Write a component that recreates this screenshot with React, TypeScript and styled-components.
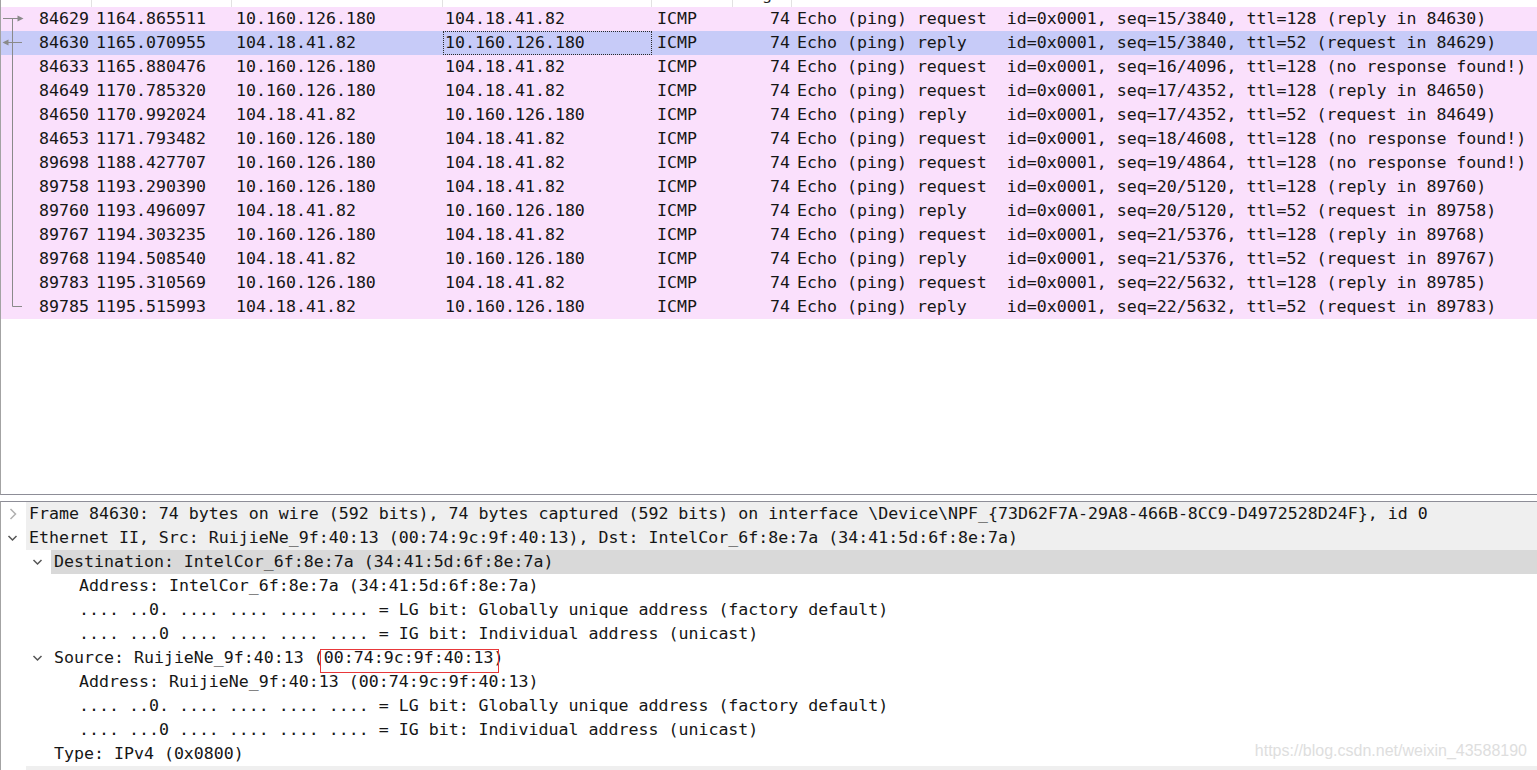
import React from "react";
import styled, { createGlobalStyle, css } from "styled-components";

const Global = createGlobalStyle`
  html, body { margin: 0; padding: 0; background: #fff; overflow: hidden; }
  #root { width: 1537px; height: 770px; }
`;

const MONO = `"DejaVu Sans Mono", "Liberation Mono", monospace`;

const App_ = styled.div`
  width: 1537px;
  height: 770px;
  display: flex;
  flex-direction: column;
  overflow: hidden;
  background: #fff;
  font-family: ${MONO};
  font-size: 16.6px;
  color: #161616;
`;

const PacketPane = styled.div`
  height: 495px;
  box-sizing: border-box;
  border-left: 1px solid #a3a3a3;
  border-bottom: 1px solid #8d8d97;
  overflow: hidden;
  flex: none;
`;

type Col = { w: number; align: "left" | "right"; pl: number; pr: number };
const COLS: Col[] = [
  { w: 91, align: "right", pl: 0, pr: 3 },
  { w: 140, align: "left", pl: 4, pr: 0 },
  { w: 211, align: "left", pl: 4, pr: 0 },
  { w: 209, align: "left", pl: 2, pr: 0 },
  { w: 81, align: "left", pl: 5, pr: 0 },
  { w: 59, align: "right", pl: 0, pr: 2 },
  { w: 0, align: "left", pl: 5, pr: 0 },
];
const gridTemplate = COLS.map((c) => (c.w ? `${c.w}px` : "1fr")).join(" ");

const HeaderRow = styled.div`
  display: grid;
  grid-template-columns: ${gridTemplate};
  height: 24px;
  margin-top: -17px;
  background: #fff;
  font-family: "Noto Sans", "Liberation Sans", sans-serif;
  font-size: 15px;
  line-height: 20px;
  color: #222;
`;

const HeaderCell = styled.div<{ $last?: boolean }>`
  padding-left: 4px;
  border-right: ${(p) => (p.$last ? "none" : "1px solid #e2e2e2")};
  white-space: nowrap;
  overflow: hidden;
`;

const PacketRow = styled.div<{ $selected?: boolean }>`
  display: grid;
  grid-template-columns: ${gridTemplate};
  height: 24px;
  line-height: 24px;
  background: ${(p) => (p.$selected ? "#c7cbf8" : "#fae0fc")};
  white-space: pre;
`;

const Cell = styled.div<{ $align: string; $pl: number; $pr: number; $focus?: boolean }>`
  text-align: ${(p) => p.$align};
  padding-left: ${(p) => p.$pl}px;
  padding-right: ${(p) => p.$pr}px;
  overflow: hidden;
  ${(p) =>
    p.$focus &&
    css`
      outline: 1px dotted #2a2a2a;
      outline-offset: -1px;
    `}
`;

const NoCell = styled.div`
  display: flex;
  align-items: center;
  justify-content: space-between;
  padding-right: 3px;
`;

const RelSvg = styled.svg`
  width: 24px;
  height: 24px;
  flex: none;
  display: block;
`;

type Rel = "first" | "reply" | "mid" | "last";

function RelIcon({ kind }: { kind: Rel }) {
  const c = "#8a8a8a";
  return (
    <RelSvg viewBox="0 0 24 24">
      {kind === "first" && (
        <>
          <path d="M2 11.5H17M11.5 11.5V24" stroke={c} strokeWidth="1" fill="none" />
          <polygon points="16.5,8.5 22.5,11.5 16.5,14.5" fill={c} />
        </>
      )}
      {kind === "reply" && (
        <>
          <path d="M11.5 0V24M7 11.5H21" stroke={c} strokeWidth="1" fill="none" />
          <polygon points="1.5,11.5 7.5,8.5 7.5,14.5" fill={c} />
        </>
      )}
      {kind === "mid" && <path d="M11.5 0V24" stroke={c} strokeWidth="1" fill="none" />}
      {kind === "last" && <path d="M11.5 0V11.5H21" stroke={c} strokeWidth="1" fill="none" />}
    </RelSvg>
  );
}

type Pkt = {
  no: string;
  time: string;
  src: string;
  dst: string;
  kind: "request" | "reply";
  seq: string;
  ttl: string;
  tail: string;
  rel: Rel;
  selected?: boolean;
};

const A = "10.160.126.180";
const B = "104.18.41.82";

const PACKETS: Pkt[] = [
  { no: "84629", time: "1164.865511", src: A, dst: B, kind: "request", seq: "15/3840", ttl: "128", tail: "(reply in 84630)", rel: "first" },
  { no: "84630", time: "1165.070955", src: B, dst: A, kind: "reply", seq: "15/3840", ttl: "52", tail: "(request in 84629)", rel: "reply", selected: true },
  { no: "84633", time: "1165.880476", src: A, dst: B, kind: "request", seq: "16/4096", ttl: "128", tail: "(no response found!)", rel: "mid" },
  { no: "84649", time: "1170.785320", src: A, dst: B, kind: "request", seq: "17/4352", ttl: "128", tail: "(reply in 84650)", rel: "mid" },
  { no: "84650", time: "1170.992024", src: B, dst: A, kind: "reply", seq: "17/4352", ttl: "52", tail: "(request in 84649)", rel: "mid" },
  { no: "84653", time: "1171.793482", src: A, dst: B, kind: "request", seq: "18/4608", ttl: "128", tail: "(no response found!)", rel: "mid" },
  { no: "89698", time: "1188.427707", src: A, dst: B, kind: "request", seq: "19/4864", ttl: "128", tail: "(no response found!)", rel: "mid" },
  { no: "89758", time: "1193.290390", src: A, dst: B, kind: "request", seq: "20/5120", ttl: "128", tail: "(reply in 89760)", rel: "mid" },
  { no: "89760", time: "1193.496097", src: B, dst: A, kind: "reply", seq: "20/5120", ttl: "52", tail: "(request in 89758)", rel: "mid" },
  { no: "89767", time: "1194.303235", src: A, dst: B, kind: "request", seq: "21/5376", ttl: "128", tail: "(reply in 89768)", rel: "mid" },
  { no: "89768", time: "1194.508540", src: B, dst: A, kind: "reply", seq: "21/5376", ttl: "52", tail: "(request in 89767)", rel: "mid" },
  { no: "89783", time: "1195.310569", src: A, dst: B, kind: "request", seq: "22/5632", ttl: "128", tail: "(reply in 89785)", rel: "mid" },
  { no: "89785", time: "1195.515993", src: B, dst: A, kind: "reply", seq: "22/5632", ttl: "52", tail: "(request in 89783)", rel: "last" },
];

const HEADERS = ["No.", "Time", "Source", "Destination", "Protocol", "Length", "Info"];

const Splitter = styled.div`
  height: 6px;
  flex: none;
  background: #fff;
`;

const DetailPane = styled.div`
  position: relative;
  flex: 1;
  border-top: 1px solid #8d8d97;
  border-left: 1px solid #a3a3a3;
  overflow: hidden;
`;

const DetailRow = styled.div<{ $level: number }>`
  display: flex;
  height: 24px;
  line-height: 24px;
  padding-left: ${(p) => p.$level * 25}px;
  white-space: pre;
`;

const Expander = styled.div`
  width: 25px;
  height: 24px;
  flex: none;
  display: flex;
  align-items: center;
`;

const Label = styled.div<{ $tone: "none" | "top" | "selected" }>`
  flex: 1;
  padding-left: 3px;
  background: ${(p) => (p.$tone === "top" ? "#efefef" : p.$tone === "selected" ? "#d9d9d9" : "transparent")};
`;

const Marked = styled.span`
  position: relative;
  &::after {
    content: "";
    position: absolute;
    left: -4px;
    right: -5px;
    top: 1px;
    height: 24px;
    border: 1px solid #e8383a;
    box-sizing: border-box;
  }
`;

const Watermark = styled.div`
  position: absolute;
  right: 10px;
  bottom: 11px;
  font-family: "Liberation Sans", Arial, sans-serif;
  font-size: 16px;
  line-height: 16px;
  color: #dedede;
  white-space: nowrap;
`;

function Chevron({ open }: { open: boolean }) {
  return (
    <svg width="25" height="24" viewBox="0 0 25 24" style={{ display: "block" }}>
      {open ? (
        <path d="M7.5 10L11.5 14L15.5 10" stroke="#555" strokeWidth="1.5" fill="none" />
      ) : (
        <path d="M9.5 7L14.5 12L9.5 17" stroke="#b0b0b0" strokeWidth="1.5" fill="none" />
      )}
    </svg>
  );
}

type D = { level: number; text: React.ReactNode; exp?: "open" | "closed"; tone?: "none" | "top" | "selected" };

const DETAILS: D[] = [
  {
    level: 0,
    exp: "closed",
    tone: "top",
    text: "Frame 84630: 74 bytes on wire (592 bits), 74 bytes captured (592 bits) on interface \\Device\\NPF_{73D62F7A-29A8-466B-8CC9-D4972528D24F}, id 0",
  },
  {
    level: 0,
    exp: "open",
    tone: "top",
    text: "Ethernet II, Src: RuijieNe_9f:40:13 (00:74:9c:9f:40:13), Dst: IntelCor_6f:8e:7a (34:41:5d:6f:8e:7a)",
  },
  { level: 1, exp: "open", tone: "selected", text: "Destination: IntelCor_6f:8e:7a (34:41:5d:6f:8e:7a)" },
  { level: 2, text: "Address: IntelCor_6f:8e:7a (34:41:5d:6f:8e:7a)" },
  { level: 2, text: ".... ..0. .... .... .... .... = LG bit: Globally unique address (factory default)" },
  { level: 2, text: ".... ...0 .... .... .... .... = IG bit: Individual address (unicast)" },
  {
    level: 1,
    exp: "open",
    text: (
      <>
        Source: RuijieNe_9f:40:13 (<Marked>00:74:9c:9f:40:13</Marked>)
      </>
    ),
  },
  { level: 2, text: "Address: RuijieNe_9f:40:13 (00:74:9c:9f:40:13)" },
  { level: 2, text: ".... ..0. .... .... .... .... = LG bit: Globally unique address (factory default)" },
  { level: 2, text: ".... ...0 .... .... .... .... = IG bit: Individual address (unicast)" },
  { level: 1, text: "Type: IPv4 (0x0800)" },
  {
    level: 0,
    exp: "closed",
    tone: "top",
    text: "Internet Protocol Version 4, Src: 104.18.41.82, Dst: 10.160.126.180",
  },
];

export default function App() {
  return (
    <>
      <Global />
      <App_>
        <PacketPane>
          <HeaderRow>
            {HEADERS.map((h, i) => (
              <HeaderCell key={h} $last={i === HEADERS.length - 1}>
                {h}
              </HeaderCell>
            ))}
          </HeaderRow>
          {PACKETS.map((p) => {
            const info = `Echo (ping) ${p.kind === "request" ? "request  " : "reply    "}id=0x0001, seq=${p.seq}, ttl=${p.ttl} ${p.tail}`;
            const vals = [p.time, p.src, p.dst, "ICMP", "74", info];
            return (
              <PacketRow key={p.no} $selected={p.selected}>
                <NoCell>
                  <RelIcon kind={p.rel} />
                  <span>{p.no}</span>
                </NoCell>
                {vals.map((v, i) => {
                  const c = COLS[i + 1];
                  return (
                    <Cell key={i} $align={c.align} $pl={c.pl} $pr={c.pr} $focus={p.selected && i === 2}>
                      {v}
                    </Cell>
                  );
                })}
              </PacketRow>
            );
          })}
        </PacketPane>
        <Splitter />
        <DetailPane>
          {DETAILS.map((d, i) => (
            <DetailRow key={i} $level={d.level}>
              <Expander>{d.exp && <Chevron open={d.exp === "open"} />}</Expander>
              <Label $tone={d.tone ?? "none"}>{d.text}</Label>
            </DetailRow>
          ))}
          <Watermark>https://blog.csdn.net/weixin_43588190</Watermark>
        </DetailPane>
      </App_>
    </>
  );
}
